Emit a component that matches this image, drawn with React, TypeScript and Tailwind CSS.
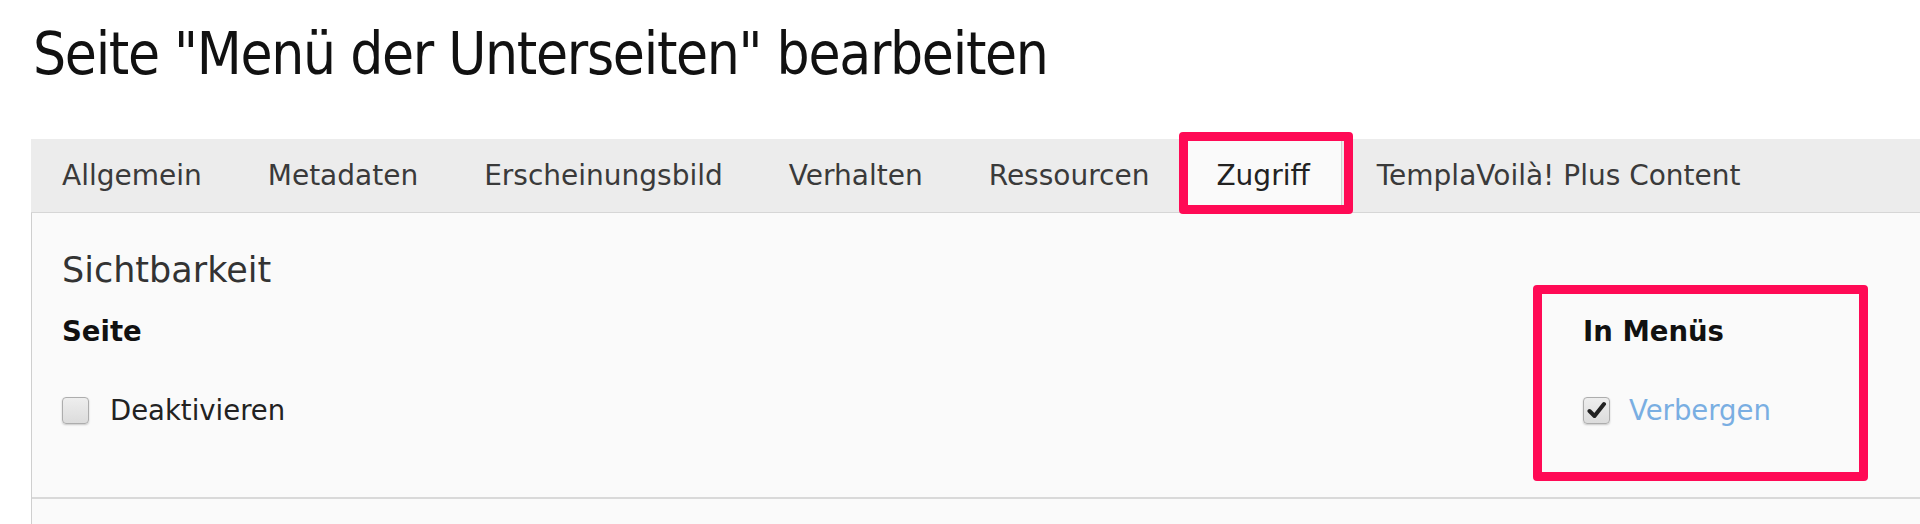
import React from 'react';

const tabs = [
  'Allgemein',
  'Metadaten',
  'Erscheinungsbild',
  'Verhalten',
  'Ressourcen',
  'Zugriff',
  'TemplaVoilà! Plus Content',
];

function Checkbox({ checked }: { checked?: boolean }) {
  return (
    <span className="flex h-[27px] w-[27px] shrink-0 items-center justify-center rounded-[4px] border border-[#adadad] bg-gradient-to-b from-[#eeeeee] to-[#dcdcdc] shadow-[0_1px_2px_rgba(0,0,0,0.2)]">
      {checked && (
        <svg width="20" height="18" viewBox="0 0 20 18">
          <path d="M2.5 10 L7.5 15 L17 3" fill="none" stroke="#222" strokeWidth="4" strokeLinecap="round" strokeLinejoin="round" />
        </svg>
      )}
    </span>
  );
}

export default function App() {
  return (
    <div className="relative h-[524px] w-[1920px] overflow-hidden bg-white font-['DejaVu_Sans',sans-serif] text-[#333]">
      <h1 className="pl-[33px] pt-[25px] font-['DejaVu_Sans_Condensed','DejaVu_Sans',sans-serif] text-[58px] leading-none font-normal tracking-[-1.3px] text-[#111] [font-stretch:condensed]">
        Seite "Menü der Unterseiten" bearbeiten
      </h1>

      <div className="ml-[31px] mt-[56px]">
        {/* tab bar */}
        <div className="flex h-[74px] gap-[4px] border-b border-[#d6d6d6] bg-[#ececec]">
          {tabs.map((t) => (
            <div
              key={t}
              className={
                t === 'Zugriff'
                  ? '-mb-px flex items-center whitespace-nowrap border-x border-[#cfcfcf] bg-[#fafafa] px-[31px] text-[28px] leading-none text-[#222]'
                  : 'flex items-center whitespace-nowrap px-[31px] text-[28px] leading-none text-[#3a3a3a]'
              }
            >
              {t}
            </div>
          ))}
        </div>

        {/* panel */}
        <div className="border-l border-[#cfcfcf] bg-[#fafafa]">
          <div className="h-[286px] border-b-2 border-[#d9d9d9] pl-[30px] pt-[40px]">
            <div className="text-[35px] leading-none text-[#333]">Sichtbarkeit</div>
            <div className="mt-[30px] grid grid-cols-[1521px_1fr]">
              <div>
                <div className="text-[27.5px] font-bold leading-none text-[#111]">Seite</div>
                <label className="mt-[51px] flex items-center gap-[21px]">
                  <Checkbox />
                  <span className="text-[27.5px] leading-none text-[#222]">Deaktivieren</span>
                </label>
              </div>
              <div>
                <div className="text-[27.5px] font-bold leading-none text-[#111]">In Menüs</div>
                <label className="mt-[51px] flex items-center gap-[19px]">
                  <Checkbox checked />
                  <span className="text-[27.5px] leading-none text-[#79aee2]">Verbergen</span>
                </label>
              </div>
            </div>
          </div>
          <div className="h-[40px]" />
        </div>
      </div>

      {/* highlight frames */}
      <div className="absolute left-[1179px] top-[132px] h-[82px] w-[174px] rounded-[4px] border-[9px] border-[#ff0a55]" />
      <div className="absolute left-[1533px] top-[285px] h-[196px] w-[335px] rounded-[4px] border-[9px] border-[#ff0a55]" />
    </div>
  );
}
